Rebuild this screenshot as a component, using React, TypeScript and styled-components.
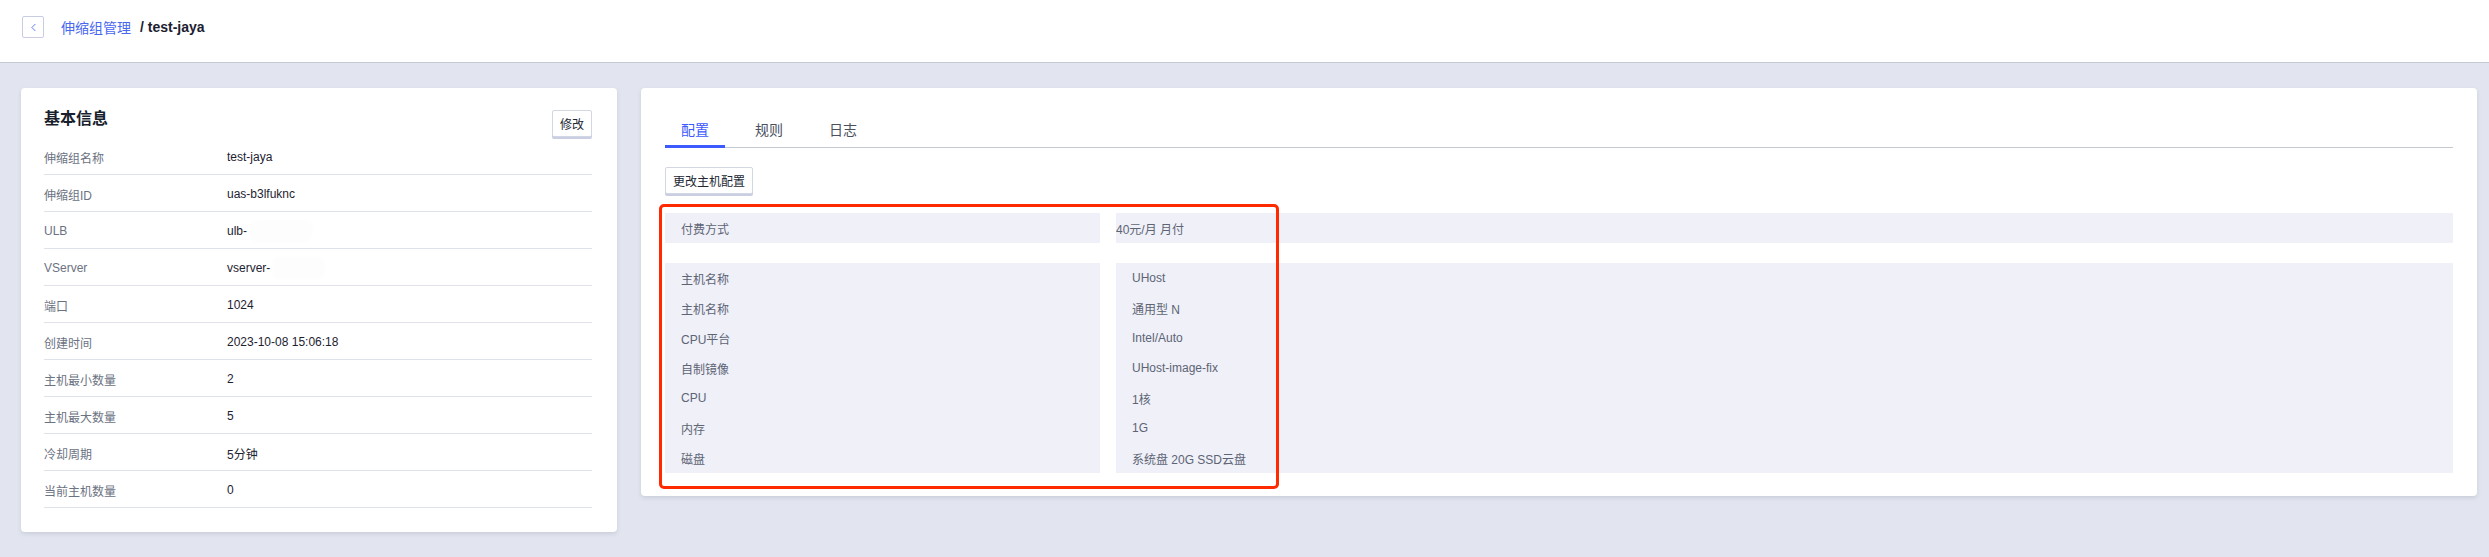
import React from "react";
import styled, { createGlobalStyle } from "styled-components";
import { ChevronLeft } from "lucide-react";

const GlobalStyle = createGlobalStyle`
  html, body { margin: 0; padding: 0; }
  body {
    background: #e2e5ef;
    font-family: "Liberation Sans", "Noto Sans CJK SC", sans-serif;
    -webkit-font-smoothing: antialiased;
  }
  * { box-sizing: border-box; }
`;

const Page = styled.div`
  width: 2489px;
  height: 557px;
  display: flex;
  flex-direction: column;
  background: #e2e5ef;
`;

const Header = styled.header`
  height: 63px;
  flex: none;
  background: #ffffff;
  border-bottom: 1px solid #c6cad3;
  display: flex;
  align-items: center;
  padding-left: 22px;
  padding-bottom: 8px;
`;

const BackButton = styled.button`
  width: 22px;
  height: 22px;
  padding: 0;
  border: 1px solid #c8cde4;
  border-radius: 2px;
  background: #fff;
  color: #4a67f0;
  display: flex;
  align-items: center;
  justify-content: center;
`;

const Crumb = styled.a`
  margin-left: 17px;
  font-size: 14px;
  color: #4a67f0;
  text-decoration: none;
`;

const Current = styled.span`
  margin-left: 9px;
  font-size: 14px;
  font-weight: 700;
  color: #1b2030;
`;

const Main = styled.main`
  flex: 1;
  display: flex;
  align-items: flex-start;
  gap: 24px;
  padding: 25px 12px 0 21px;
`;

const Card = styled.section<{ $grow?: boolean }>`
  position: relative;
  background: #ffffff;
  border-radius: 4px;
  box-shadow: 0 2px 4px rgba(60, 70, 100, 0.14);
  ${(p) => (p.$grow ? "flex: 1;" : "width: 596px; flex: none;")}
`;

const InfoCard = styled(Card)`
  padding: 22px 25px 24px 23px;
`;

const TitleRow = styled.div`
  display: flex;
  justify-content: space-between;
  align-items: flex-start;
  height: 28px;
`;

const Title = styled.h2`
  margin: 0;
  font-size: 16px;
  line-height: 18px;
  font-weight: 700;
  color: #1a1f2e;
`;

const GhostButton = styled.button`
  height: 27px;
  padding: 0 7px;
  border: 1px solid #d3d7e3;
  border-radius: 2px;
  background: #fff;
  box-shadow: 0 2px 0 #c9cee2;
  font-family: inherit;
  font-size: 12px;
  color: #222734;
  cursor: pointer;
`;

const InfoRow = styled.div`
  display: grid;
  grid-template-columns: 183px 1fr;
  align-items: center;
  height: 37px;
  padding-top: 2px;
  border-bottom: 1px solid #dfe2ea;
  font-size: 12px;
`;

const InfoLabel = styled.span`
  color: #6b7282;
`;

const InfoValue = styled.span`
  color: #1d2230;
  display: flex;
  align-items: center;
`;

const Redacted = styled.span<{ $w: number }>`
  display: inline-block;
  width: ${(p) => p.$w}px;
  height: 20px;
  margin-left: 4px;
  background: #fdfdfd;
  border-radius: 6px;
  box-shadow: 0 0 4px #fbfbfb;
`;

const ConfigCard = styled(Card)`
  padding: 22px 24px 23px 24px;
`;

const Tabs = styled.div`
  display: flex;
  border-bottom: 1px solid #c5c9d2;
`;

const Tab = styled.div<{ $active?: boolean }>`
  height: 38px;
  padding: 3px 16px 0;
  margin-right: 14px;
  margin-bottom: -1px;
  display: flex;
  align-items: center;
  font-size: 14px;
  color: ${(p) => (p.$active ? "#3d5afe" : "#4a5060")};
  border-bottom: 3px solid ${(p) => (p.$active ? "#3d5afe" : "transparent")};
`;

const Toolbar = styled.div`
  padding: 19px 0;
`;

const Table = styled.div<{ $gapTop?: boolean }>`
  display: grid;
  grid-template-columns: 435px 1fr;
  column-gap: 16px;
  margin-top: ${(p) => (p.$gapTop ? "20px" : "0")};
`;

const Cell = styled.div<{ $pad?: boolean }>`
  background: #eff0f8;
  padding: 0 ${(p) => (p.$pad ? "16px" : "0")};
  font-size: 12px;
  color: #5d6474;
`;

const Line = styled.div`
  height: 30px;
  display: flex;
  align-items: center;
`;

const Highlight = styled.div`
  position: absolute;
  left: 18px;
  top: 116px;
  width: 620px;
  height: 285px;
  border: 3px solid #ff2a00;
  border-radius: 5px;
  pointer-events: none;
`;

const basic: [string, React.ReactNode][] = [
  ["伸缩组名称", "test-jaya"],
  ["伸缩组ID", "uas-b3lfuknc"],
  ["ULB", <>ulb-<Redacted $w={60} /></>],
  ["VServer", <>vserver-<Redacted $w={50} /></>],
  ["端口", "1024"],
  ["创建时间", "2023-10-08 15:06:18"],
  ["主机最小数量", "2"],
  ["主机最大数量", "5"],
  ["冷却周期", "5分钟"],
  ["当前主机数量", "0"],
];

const hostRows: [string, string][] = [
  ["主机名称", "UHost"],
  ["主机名称", "通用型 N"],
  ["CPU平台", "Intel/Auto"],
  ["自制镜像", "UHost-image-fix"],
  ["CPU", "1核"],
  ["内存", "1G"],
  ["磁盘", "系统盘 20G SSD云盘"],
];

export default function App() {
  return (
    <>
      <GlobalStyle />
      <Page>
        <Header>
          <BackButton aria-label="back">
            <ChevronLeft size={13} strokeWidth={1.6} />
          </BackButton>
          <Crumb href="#">伸缩组管理</Crumb>
          <Current>/ test-jaya</Current>
        </Header>
        <Main>
          <InfoCard>
            <TitleRow>
              <Title>基本信息</Title>
              <GhostButton>修改</GhostButton>
            </TitleRow>
            {basic.map(([k, v], i) => (
              <InfoRow key={i}>
                <InfoLabel>{k}</InfoLabel>
                <InfoValue>{v}</InfoValue>
              </InfoRow>
            ))}
          </InfoCard>
          <ConfigCard $grow>
            <Tabs>
              <Tab $active>配置</Tab>
              <Tab>规则</Tab>
              <Tab>日志</Tab>
            </Tabs>
            <Toolbar>
              <GhostButton>更改主机配置</GhostButton>
            </Toolbar>
            <Table>
              <Cell $pad>
                <Line>付费方式</Line>
              </Cell>
              <Cell>
                <Line>40元/月 月付</Line>
              </Cell>
            </Table>
            <Table $gapTop>
              <Cell $pad>
                {hostRows.map(([k], i) => (
                  <Line key={i}>{k}</Line>
                ))}
              </Cell>
              <Cell $pad>
                {hostRows.map(([, v], i) => (
                  <Line key={i}>{v}</Line>
                ))}
              </Cell>
            </Table>
            <Highlight />
          </ConfigCard>
        </Main>
      </Page>
    </>
  );
}
